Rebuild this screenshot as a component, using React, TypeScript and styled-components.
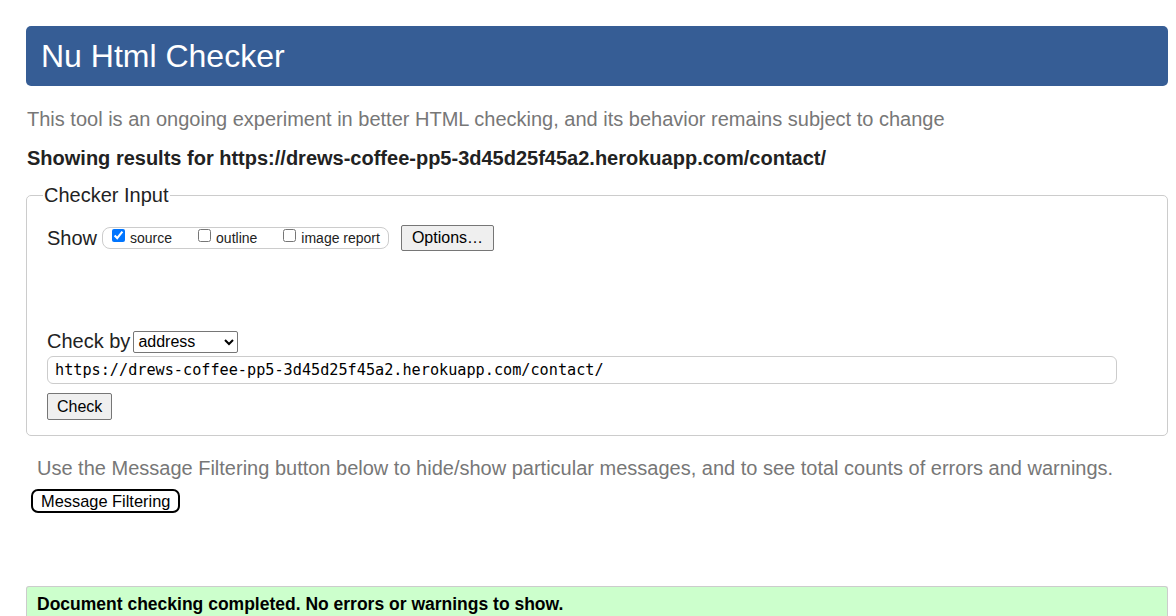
import React from "react";
import styled, { createGlobalStyle } from "styled-components";

const Global = createGlobalStyle`
  html, body { margin: 0; padding: 0; background: #fff; }
  body { font-family: "Liberation Sans", Arial, sans-serif; color: #222; }
`;

const Page = styled.div`
  padding: 26px 8px 0 26px;
`;

const Header = styled.h1`
  margin: 0;
  height: 60px;
  display: flex;
  align-items: center;
  padding: 0 15px;
  background: #365d95;
  border-radius: 5px;
  color: #fff;
  font-size: 32px;
  font-weight: normal;
`;

const Intro = styled.p`
  margin: 22px 0 0 1px;
  font-size: 20px;
  line-height: 23px;
  color: #777;
`;

const Results = styled.h2`
  margin: 16px 0 0 1px;
  font-size: 20px;
  line-height: 23px;
  font-weight: bold;
  color: #222;
`;

const Fieldset = styled.fieldset`
  margin: 14px 0 0 0;
  padding: 0 20px 15px 20px;
  border: 1px solid #ccc;
  border-radius: 5px;
  min-width: 0;
`;

const Legend = styled.legend`
  margin-left: -4px;
  padding: 0 1px;
  font-size: 20px;
  line-height: 23px;
  color: #222;
`;

const Row = styled.div<{ $top: number }>`
  display: flex;
  align-items: center;
  margin-top: ${(p) => p.$top}px;
`;

const Label = styled.span`
  font-size: 20px;
  line-height: 23px;
  color: #222;
`;

const Group = styled.div`
  display: flex;
  align-items: center;
  height: 20px;
  margin-left: 5px;
  padding: 0 8px 0 7px;
  border: 1px solid #ccc;
  border-radius: 8px;
`;

const Opt = styled.label`
  display: flex;
  align-items: flex-end;
  font-size: 14px;
  color: #222;
  margin-right: 24px;
  &:last-child { margin-right: 0; }
  input {
    margin: 0 5px 0 2px;
    width: 13px;
    height: 13px;
    position: relative;
    top: -4px;
  }
`;

const Button = styled.button`
  font-family: "Liberation Sans", Arial, sans-serif;
  font-size: 16px;
  color: #000;
  background: #efefef;
  border: 1px solid #767676;
  border-radius: 2px;
  padding: 0 10px;
  height: 26px;
`;

const OptionsButton = styled(Button)`
  margin-left: 12px;
`;

const Select = styled.select`
  margin-left: 3px;
  width: 105px;
  height: 22px;
  font-family: "Liberation Sans", Arial, sans-serif;
  font-size: 16px;
  color: #000;
  border: 1px solid #767676;
  border-radius: 2px;
  background: #fff;
`;

const UrlInput = styled.input`
  display: block;
  box-sizing: border-box;
  margin-top: 3px;
  width: 1070px;
  height: 28px;
  padding: 0 7px;
  border: 1px solid #ccc;
  border-radius: 6px;
  font-family: "DejaVu Sans Mono", "Liberation Mono", monospace;
  font-size: 15.2px;
  color: #000;
  outline: none;
`;

const CheckButton = styled(Button)`
  display: block;
  margin-top: 9px;
  height: 27px;
  padding: 0 9px;
`;

const Note = styled.p`
  margin: 21px 0 0 11px;
  font-size: 20px;
  line-height: 23px;
  color: #777;
`;

const FilterButton = styled.button`
  margin: 9px 0 0 5px;
  height: 24px;
  padding: 0 8px;
  background: #fff;
  border: 2px solid #000;
  border-radius: 7px;
  font-family: "Liberation Sans", Arial, sans-serif;
  font-size: 16.4px;
  color: #000;
`;

const Success = styled.div`
  margin-top: 73px;
  padding: 7px 10px 5px 10px;
  background: #ccffcc;
  border: 1px solid #ccc;
  border-bottom: none;
  border-radius: 3px 3px 0 0;
  font-size: 17.5px;
  font-weight: bold;
  color: #000;
`;

export default function App() {
  return (
    <>
      <Global />
      <Page>
        <Header>Nu Html Checker</Header>
        <Intro>
          This tool is an ongoing experiment in better HTML checking, and its behavior remains subject to change
        </Intro>
        <Results>Showing results for https://drews-coffee-pp5-3d45d25f45a2.herokuapp.com/contact/</Results>
        <Fieldset>
          <Legend>Checker Input</Legend>
          <Row $top={18}>
            <Label>Show</Label>
            <Group>
              <Opt>
                <input type="checkbox" defaultChecked />
                source
              </Opt>
              <Opt>
                <input type="checkbox" />
                outline
              </Opt>
              <Opt>
                <input type="checkbox" />
                image report
              </Opt>
            </Group>
            <OptionsButton>Options…</OptionsButton>
          </Row>
          <Row $top={79}>
            <Label>Check by</Label>
            <Select defaultValue="address">
              <option value="address">address</option>
              <option value="file">file upload</option>
              <option value="text">text input</option>
            </Select>
          </Row>
          <UrlInput defaultValue="https://drews-coffee-pp5-3d45d25f45a2.herokuapp.com/contact/" />
          <CheckButton>Check</CheckButton>
        </Fieldset>
        <Note>
          Use the Message Filtering button below to hide/show particular messages, and to see total counts of errors and warnings.
        </Note>
        <FilterButton>Message Filtering</FilterButton>
        <Success>Document checking completed. No errors or warnings to show.</Success>
      </Page>
    </>
  );
}
